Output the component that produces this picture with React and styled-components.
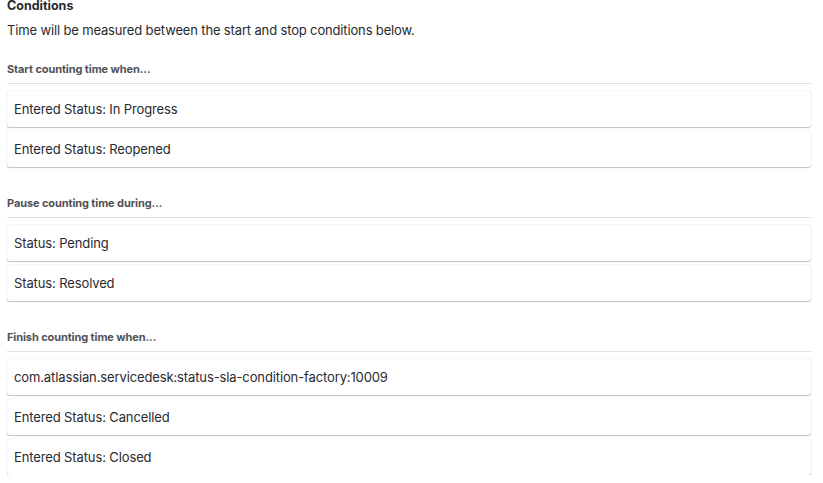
import styled, { createGlobalStyle } from "styled-components";

const GlobalStyle = createGlobalStyle`
  body {
    margin: 0;
    background: #ffffff;
    font-family: Inter, "Noto Sans", sans-serif;
    color: #292a2e;
  }
`;

const Page = styled.div`
  padding: 0 12px 0 7px;
`;

const Title = styled.h3`
  margin: 0;
  font-size: 12.5px;
  font-weight: 700;
  line-height: 11px;
  color: #292a2e;
`;

const Description = styled.p`
  margin: 9px 0 0;
  font-size: 13px;
  line-height: 20px;
  letter-spacing: -0.15px;
`;

const Section = styled.section`
  margin-top: ${props => props.first ? "21px" : "28px"};
`;

const SectionHeading = styled.h4`
  margin: 0;
  padding-bottom: 6px;
  border-bottom: 1px solid #dcdfe4;
  font-size: 11px;
  font-weight: 700;
  line-height: 16px;
  letter-spacing: -0.1px;
  color: #505258;
`;

const CardList = styled.div`
  display: flex;
  flex-direction: column;
  gap: 4px;
  margin-top: 7px;
`;

const Card = styled.div`
  background: #ffffff;
  border-radius: 3px;
  box-shadow: 0 1px 1px rgba(9, 30, 66, 0.25), 0 0 1px rgba(9, 30, 66, 0.31);
  padding: 8px 7px;
  font-size: 13px;
  line-height: 20px;
  letter-spacing: -0.12px;
`;

const sections = [
  {
    title: "Start counting time when...",
    items: ["Entered Status: In Progress", "Entered Status: Reopened"],
  },
  {
    title: "Pause counting time during...",
    items: ["Status: Pending", "Status: Resolved"],
  },
  {
    title: "Finish counting time when...",
    items: [
      "com.atlassian.servicedesk:status-sla-condition-factory:10009",
      "Entered Status: Cancelled",
      "Entered Status: Closed",
    ],
  },
];

const App = () => {
  return (
    <>
      <GlobalStyle />
      <Page>
        <Title>Conditions</Title>
        <Description>Time will be measured between the start and stop conditions below.</Description>
        {sections.map((section, idx) => (
          <Section key={idx} first={idx === 0}>
            <SectionHeading>{section.title}</SectionHeading>
            <CardList>
              {section.items.map((item, i) => <Card key={i}>{item}</Card>)}
            </CardList>
          </Section>
        ))}
      </Page>
    </>
  );
};

export default App;
